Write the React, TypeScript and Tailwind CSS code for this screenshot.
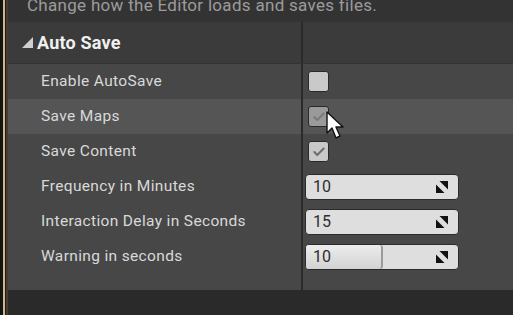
import { Check } from "lucide-react";

type Row =
    | { label: string; kind: "check"; checked: boolean; dim?: boolean; hover?: boolean }
    | { label: string; kind: "num"; value: string; fill?: number };

const rows: Row[] = [
    { label: "Enable AutoSave", kind: "check", checked: false },
    { label: "Save Maps", kind: "check", checked: true, dim: true, hover: true },
    { label: "Save Content", kind: "check", checked: true },
    { label: "Frequency in Minutes", kind: "num", value: "10" },
    { label: "Interaction Delay in Seconds", kind: "num", value: "15" },
    { label: "Warning in seconds", kind: "num", value: "10", fill: 77 },
];

const SpinArrows = () => (
    <svg width="12" height="12" viewBox="0 0 12 12">
        <polygon points="3.5,0 12,0 12,8.5" fill="#111" />
        <polygon points="0,3.5 0,12 8.5,12" fill="#111" />
    </svg>
);

const Cursor = () => (
    <svg width="20" height="30" viewBox="0 0 20 30" className="absolute left-[326px] top-[111px]">
        <path d="M1 1 L1 22 L6 17 L10 27 L14 25 L10 16 L17 16 Z" fill="#fff" stroke="#111" strokeWidth="1.4" strokeLinejoin="round" />
    </svg>
);

const Checkbox = ({ checked, dim }: { checked: boolean; dim?: boolean }) => (
    <div
        className={`w-[21px] h-[21px] rounded-[3px] border border-[#2a2a2a] flex items-center justify-center ${dim ? "bg-[#9a9a9a]" : "bg-[#c9c9c9]"}`}
    >
        {checked && <Check size={14} strokeWidth={3.5} className={dim ? "text-[#7a7a7a]" : "text-[#6e6e6e]"} />}
    </div>
);

const NumBox = ({ value, fill }: { value: string; fill?: number }) => (
    <div className="relative w-[154px] h-[26px] rounded-[4px] bg-[#dedede] border border-[#2b2b2b] flex items-center overflow-hidden">
        {fill !== undefined && (
            <div
                className="absolute left-0 top-0 bottom-0 bg-gradient-to-b from-[#ededed] to-[#d2d2d2] border-r-2 border-[#9a9a9a] rounded-r-[3px]"
                style={{ width: fill }}
            />
        )}
        <span className="relative pl-[7px] text-[16px] text-[#2e2e2e]">{value}</span>
        <span className="relative ml-auto mr-[10px] flex items-center">
            <SpinArrows />
        </span>
    </div>
);

export default function App() {
    return (
        <div
            className="relative w-[513px] h-[315px] overflow-hidden flex bg-[#2b2b2b]"
            style={{ fontFamily: "Roboto, 'Liberation Sans', sans-serif" }}
        >
            <div className="w-[3px] bg-[#141414]" />
            <div className="w-[2px] bg-[#cdb989]" />
            <div className="w-[1px] bg-[#1c1c1c]" />
            <div className="w-[2px] bg-[#4a3a32]" />
            <div className="flex-1 flex flex-col">
                <div className="h-[22px] bg-[#333333] flex items-start pl-[19px] overflow-hidden">
                    <span className="text-[17px] tracking-[0.3px] text-[#9c9c9c] leading-none mt-[-3px]">
                        Change how the Editor loads and saves files.
                    </span>
                </div>
                <div className="h-[42px] bg-[#3b3b3b] flex border-b border-[#343434]">
                    <div className="w-[293px] flex items-center pl-[14px] gap-[4px]">
                        <svg width="11" height="11" viewBox="0 0 11 11">
                            <polygon points="11,0 11,11 0,11" fill="#cfcfcf" />
                        </svg>
                        <span className="text-[18px] font-bold tracking-[0.2px] text-[#f0f0f0]">Auto Save</span>
                    </div>
                    <div className="w-[2px] bg-[#2a2a2a]" />
                </div>
                <div className="h-[226px] bg-[#474747] flex flex-col">
                    {rows.map((r) => (
                        <div
                            key={r.label}
                            className={`h-[35px] flex ${r.kind === "check" && r.hover ? "bg-[#555555]" : ""}`}
                        >
                            <div className="w-[293px] flex items-center pl-[33px] text-[15.5px] tracking-[0.35px] text-[#d9d9d9]">
                                {r.label}
                            </div>
                            <div className="w-[2px] bg-[#2a2a2a]" />
                            <div className="flex-1 flex items-center pl-[2px]">
                                {r.kind === "check" ? (
                                    <div className="pl-[3px]">
                                        <Checkbox checked={r.checked} dim={r.dim} />
                                    </div>
                                ) : (
                                    <NumBox value={r.value} fill={r.fill} />
                                )}
                            </div>
                        </div>
                    ))}
                    <div className="flex-1 flex">
                        <div className="w-[293px]" />
                        <div className="w-[2px] bg-[#2a2a2a]" />
                    </div>
                </div>
                <div className="flex-1 bg-[#2a2a2a]" />
            </div>
            <Cursor />
        </div>
    );
}
